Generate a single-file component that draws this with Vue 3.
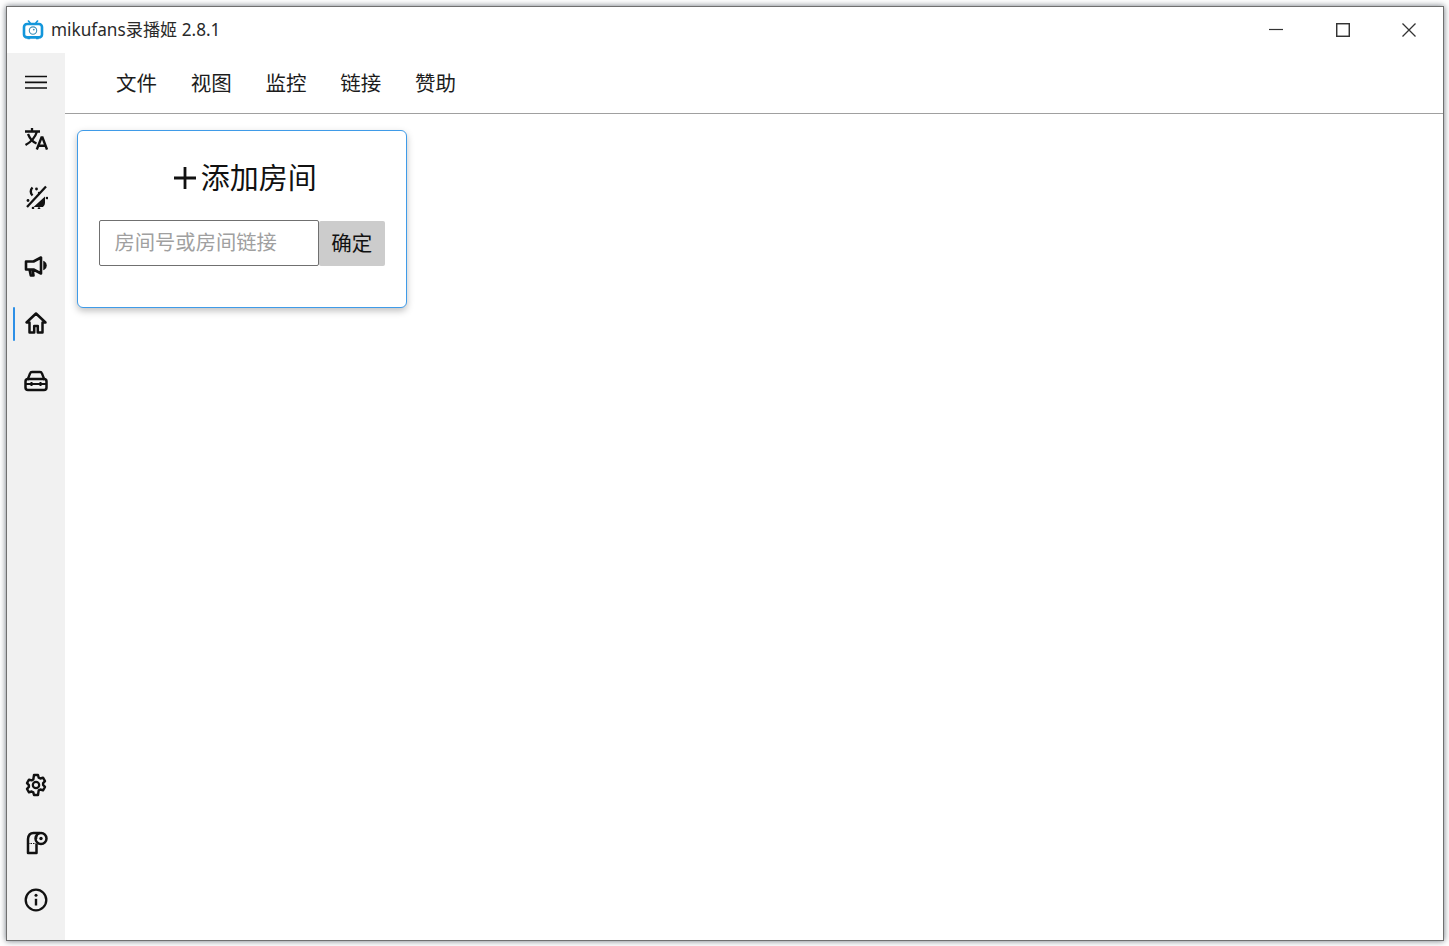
<script setup>
const menus = ['文件', '视图', '监控', '链接', '赞助']
</script>

<template>
  <div class="page">
    <div class="window">
      <header class="titlebar">
        <svg class="logo" viewBox="0 0 22 20" width="22" height="20" fill="none" stroke="#1296db">
          <path d="M6.500 1 8.500 3.600M15.500 1 13.500 3.600" stroke-width="1.600" stroke-linecap="round" />
          <rect x="2" y="4" width="18" height="13.400" rx="3" stroke-width="2.600" />
          <circle cx="11" cy="10.600" r="3.700" stroke-width="1.100" stroke="#3d8fb8" />
          <circle cx="11.800" cy="9.600" r="0.900" fill="#3d8fb8" stroke="none" />
          <path d="M5.500 18.600h2.600M14 18.600h2.600" stroke-width="1.500" />
        </svg>
        <span class="title">mikufans录播姬 2.8.1</span>
        <div class="controls">
          <svg viewBox="0 0 14 14" width="14" height="14"><path d="M0 6.500h14" stroke="#333" stroke-width="1.200" /></svg>
          <svg viewBox="0 0 14 14" width="14" height="14"><rect x=".7" y=".7" width="12.600" height="12.600" fill="none" stroke="#333" stroke-width="1.500" /></svg>
          <svg viewBox="0 0 14 14" width="14" height="14"><path d="M.5.5l13 13M13.500.5l-13 13" stroke="#333" stroke-width="1.300" /></svg>
        </div>
      </header>
      <div class="body">
        <aside class="sidebar">
          <div class="group">
            <div class="item">
              <svg viewBox="0 0 24 24" class="icon"><path d="M1 6.500h22M1 12.300h22M1 18h22" stroke-width="1.700" /></svg>
            </div>
            <div class="item">
              <svg viewBox="0 0 24 24" class="icon"><path d="M1 4.500h15M8 1v3.500M13 4.500C11 11 7 15 1.500 18M4 7c2 5 5 8 8.500 9.500" stroke-width="2.300" /><path d="M12.800 22.500 17.500 10.500h1l4.500 12M14.500 18.800h7" stroke-width="2.400" /></svg>
            </div>
            <div class="item">
              <svg viewBox="0 0 24 24" class="icon">
                <path d="M22 1.500 3 22" stroke-width="2.300" />
                <path d="M8.500 2.500a5.500 5.500 0 0 0 0 8" stroke-width="2.400" />
                <path d="M21 11.500 9.500 22h9.500a5 5 0 0 0 2-4z" fill="#111" stroke="none" />
                <g fill="#111" stroke="none"><circle cx="12.500" cy="4" r="1.400" /><circle cx="15" cy="8" r="1.200" /><circle cx="4" cy="15.500" r="1.400" /><circle cx="9" cy="23" r="1.300" /><circle cx="15" cy="23.500" r="1.300" /><circle cx="23" cy="13" r="1.300" /></g>
              </svg>
            </div>
            <div class="gap"></div>
            <div class="item">
              <svg viewBox="0 0 24 24" class="icon"><path d="M2 7.500h7.500L17 3.500v16l-7.500-4H2zM5.500 15.500l1.300 6h2.700L8.500 15.500" stroke-width="2.600" stroke-linejoin="round" /><path d="M20 8a4 4 0 0 1 0 7z" fill="#111" stroke-width="1.500" /></svg>
            </div>
            <div class="item active">
              <span class="indicator"></span>
              <svg viewBox="0 0 24 24" class="icon"><path d="M12 2.500 2.500 11.500h3V21.500h4.700v-6.500h3.600v6.500h4.700V11.500h3z" stroke-width="2.500" stroke-linejoin="round" /></svg>
            </div>
            <div class="item">
              <svg viewBox="0 0 24 24" class="icon"><path d="M3.500 11 6 4.500q.5-1.500 2-1.500h8q1.500 0 2 1.500l2.500 6.500" stroke-width="2.300" /><rect x="1.500" y="10" width="21" height="11" rx="2.500" stroke-width="2.500" /><path d="M1.500 15h21M7.500 13v4M16.500 13v4" stroke-width="2" /></svg>
            </div>
          </div>
          <div class="group bottom">
            <div class="item">
              <svg viewBox="0 0 24 24" class="icon">
                <path d="M10 2h4l.7 2.600 1.700.9 2.600-.8 2 3.500-1.900 1.900v1.800l1.900 1.900-2 3.500-2.600-.8-1.700.9L14 22h-4l-.7-2.600-1.700-.9-2.600.8-2-3.500 1.900-1.900V12.100L3 10.100l2-3.500 2.600.8 1.700-.9z" stroke-width="2.400" stroke-linejoin="round" />
                <circle cx="12" cy="12" r="3.200" stroke-width="2.200" />
              </svg>
            </div>
            <div class="item">
              <svg viewBox="0 0 24 24" class="icon"><path d="M16 2H9.500Q4.500 2 4 8v14h8.500V13" stroke-width="2.500" stroke-linejoin="round" /><path d="M4 12.500h8.500" stroke-width="1" stroke-dasharray="1.500 1" /><path d="M12.500 8q0-6 3.500-6" stroke-width="1.500" /><circle cx="17" cy="7.500" r="5.500" stroke-width="2.500" /><circle cx="17" cy="7.500" r="1.700" fill="#111" stroke="none" /></svg>
            </div>
            <div class="item">
              <svg viewBox="0 0 24 24" class="icon"><circle cx="12" cy="12" r="10.300" stroke-width="2.300" /><path d="M12 10.800v6.700" stroke-width="2.400" /><circle cx="12" cy="7.300" r="1.500" fill="#111" stroke="none" /></svg>
            </div>
          </div>
        </aside>
        <main class="main">
          <nav class="menubar">
            <span v-for="m in menus" :key="m" class="menu">{{ m }}</span>
          </nav>
          <div class="content">
            <section class="card">
              <h2 class="card-title">
                <svg viewBox="0 0 22 22" width="22" height="22"><path d="M11 0v22M0 11h22" stroke="#111" stroke-width="2.800" /></svg>
                <span>添加房间</span>
              </h2>
              <div class="form">
                <input class="input" placeholder="房间号或房间链接" />
                <button class="btn">确定</button>
              </div>
            </section>
          </div>
        </main>
      </div>
    </div>
  </div>
</template>

<style>
html, body { margin: 0; background: #fff; overflow: hidden; }
</style>

<style scoped>
.page {
  height: 946px;
  box-sizing: border-box;
  padding: 6px 5px 5px 6px;
  display: flex;
  font-family: "Noto Sans", "Noto Sans CJK SC", sans-serif;
  color: #111;
}
.window {
  flex: 1;
  min-width: 0;
  display: flex;
  flex-direction: column;
  background: #fff;
  border: 1px solid #707070;
  box-shadow: 0 0 6px rgba(60, 70, 80, 0.75);
}
.titlebar {
  height: 46px;
  flex: none;
  display: flex;
  align-items: center;
  padding-left: 15px;
  box-sizing: border-box;
}
.logo { margin-right: 7px; }
.title { font-size: 17.200px; color: #2a2a2a; margin-top: -3px; }
.controls {
  margin-left: auto;
  display: flex;
  gap: 52.500px;
  padding-right: 27px;
}
.body { flex: 1; display: flex; min-height: 0; }
.sidebar {
  width: 58px;
  flex: none;
  background: #f1f1f1;
  display: flex;
  flex-direction: column;
  justify-content: space-between;
  padding-bottom: 11px;
  box-sizing: border-box;
}
.group { display: flex; flex-direction: column; }
.gap { height: 11.500px; }
.item {
  height: 57.500px;
  display: flex;
  align-items: center;
  justify-content: center;
  position: relative;
}
.icon {
  width: 24px;
  height: 24px;
  fill: none;
  stroke: #111;
  margin-left: -1px;
}
.indicator {
  position: absolute;
  left: 6px;
  top: 12px;
  width: 2px;
  height: 34px;
  border-radius: 1px;
  background: #2d8fe6;
}
.main { flex: 1; min-width: 0; display: flex; flex-direction: column; }
.menubar {
  height: 61px;
  flex: none;
  box-sizing: border-box;
  border-bottom: 1px solid #a0a0a0;
  display: flex;
  align-items: center;
  padding-left: 34px;
}
.menu { font-size: 20.500px; font-weight: 400; padding: 0 16.900px; color: #1c1c1c; line-height: 1; }
.content { flex: 1; padding: 15.500px 11.500px; }
.card {
  width: 330.500px;
  height: 178.500px;
  box-sizing: border-box;
  border: 1.500px solid #3f9be8;
  border-radius: 6px;
  background: #fff;
  box-shadow: 0 3px 7px rgba(0, 0, 0, 0.25);
  padding: 27.500px 21.500px 0;
}
.card-title {
  margin: 0;
  height: 40px;
  display: flex;
  align-items: center;
  justify-content: center;
  gap: 5px;
  font-size: 29px;
  font-weight: 400;
  color: #111;
  line-height: 40px;
  padding-left: 7px;
  box-sizing: border-box;
}
.form { display: flex; margin-top: 22px; align-items: flex-end; }
.input {
  width: 220px;
  height: 46px;
  box-sizing: border-box;
  border: 1px solid #707070;
  border-radius: 2px;
  padding: 0 14.500px 2px;
  font: 400 20.300px "Noto Sans", "Noto Sans CJK SC", sans-serif;
  outline: none;
  background: #fff;
}
.input::placeholder { color: #a0a0a0; opacity: 1; }
.btn {
  width: 66.500px;
  height: 45px;
  border: none;
  border-radius: 2px;
  background: #cccccc;
  padding: 0 0 3px;
  font: 400 20.500px "Noto Sans", "Noto Sans CJK SC", sans-serif;
  color: #111;
}
</style>
